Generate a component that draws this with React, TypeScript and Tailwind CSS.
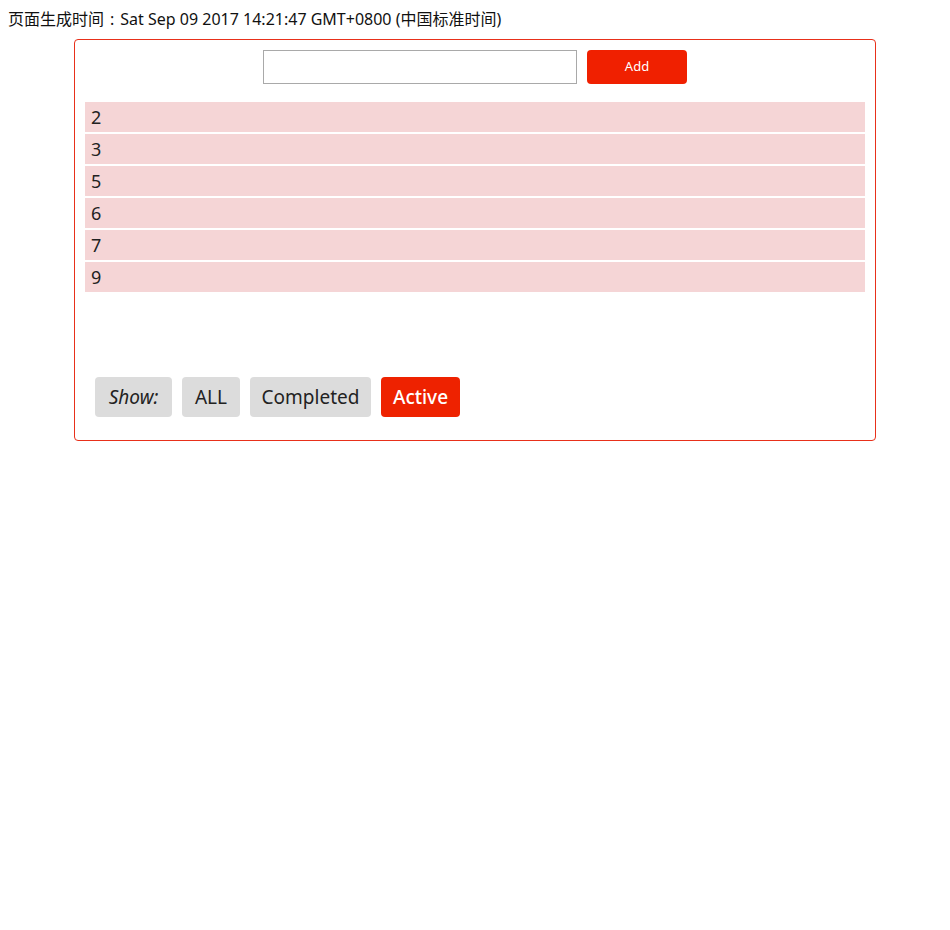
import { useState } from 'react';

const todos = [
  { id: 2, text: '2' },
  { id: 3, text: '3' },
  { id: 5, text: '5' },
  { id: 6, text: '6' },
  { id: 7, text: '7' },
  { id: 9, text: '9' },
];

const filters = [
  { name: 'ALL', width: 'w-[58px]' },
  { name: 'Completed', width: 'w-[121px]' },
  { name: 'Active', width: 'w-[79px]' },
];

export default function App() {
  const [value, setValue] = useState('');
  const [filter, setFilter] = useState('Active');

  return (
    <div className="min-h-screen bg-white p-2 text-[16px] text-[#111] font-['Noto_Sans','Noto_Sans_CJK_SC',sans-serif]">
      <div className="leading-[22px]">
        页面生成时间<span className="px-[6px]">:</span>Sat Sep 09 2017 14:21:47 GMT+0800 (中国标准时间)
      </div>

      {/* Todo box */}
      <div className="mx-auto mt-[9px] w-[802px] rounded-[4px] border border-[#e8301a] px-[10px] pt-[10px] pb-[23px]">
        <div className="flex justify-center gap-[10px]">
          <input
            value={value}
            onChange={(e) => setValue(e.target.value)}
            className="h-[34px] w-[314px] border border-[#a9a9a9] px-2 outline-none"
          />
          <button className="h-[34px] w-[100px] rounded-[4px] bg-[#f02000] text-[13px] text-white">Add</button>
        </div>

        <ul className="mt-[18px] flex flex-col gap-[2px]">
          {todos.map((t) => (
            <li key={t.id} className="h-[30px] bg-[#f5d5d6] pl-[6px] text-[18px] leading-[30px] text-[#222]">
              {t.text}
            </li>
          ))}
        </ul>

        <div className="mt-[85px] flex gap-[10px] pl-[10px] text-[19px]">
          <span className="flex h-[40px] w-[77px] items-center justify-center rounded-[4px] bg-[#dcdcdc] italic text-[#222]">
            Show:
          </span>
          {filters.map((f) => (
            <button
              key={f.name}
              onClick={() => setFilter(f.name)}
              className={
                f.name === filter
                  ? `h-[40px] ${f.width} rounded-[4px] bg-[#ee2200] font-medium text-white`
                  : `h-[40px] ${f.width} rounded-[4px] bg-[#dcdcdc] text-[#222]`
              }
            >
              {f.name}
            </button>
          ))}
        </div>
      </div>
    </div>
  );
}
